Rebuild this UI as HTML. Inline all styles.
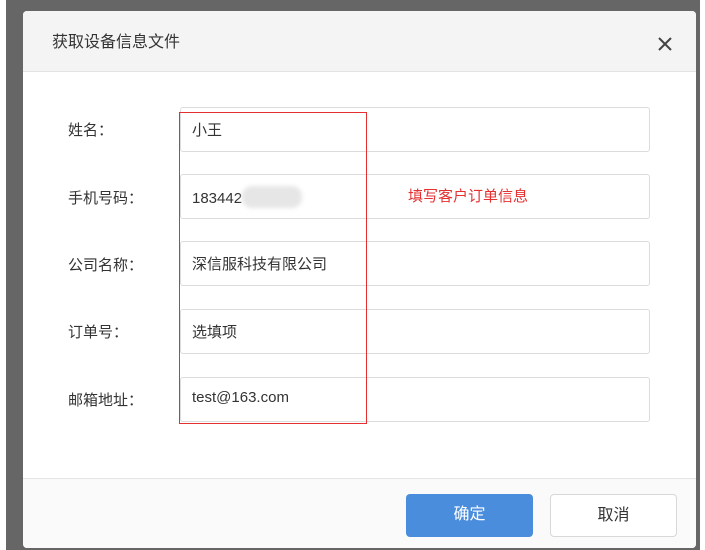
<!DOCTYPE html>
<html><head><meta charset="utf-8"><style>
*{margin:0;padding:0;box-sizing:border-box}
body{width:705px;height:550px;background:#fff;position:relative;overflow:hidden;font-family:"Liberation Sans","Noto Sans CJK SC",sans-serif;color:#333}
.bg{position:absolute;left:6px;top:0;width:694px;height:550px;background:#666}
.dlg{position:absolute;left:23px;top:11px;width:673px;height:537px;background:#fff;border-radius:4px;overflow:hidden}
.hd{height:61px;background:#f4f4f4;border-bottom:1px solid #e3e3e3;position:relative}
.hd .t{position:absolute;left:29px;top:17px;font-size:16px;color:#333}
.hd .x{position:absolute;left:633px;top:24px;width:18px;height:18px}
.lbl{position:absolute;left:45px;font-size:15px;color:#333}
.in{position:absolute;left:157px;width:470px;height:45px;border:1px solid #dcdcdc;border-radius:3px;font-size:15px;padding:11px 0 0 11px;color:#333}
.red{position:absolute;left:156px;top:101px;width:188px;height:312px;border:1.5px solid #e53030}
.ft{position:absolute;left:0;top:467px;width:673px;height:70px;background:#fafafa;border-top:1px solid #e5e5e5}
.b{position:absolute;top:15px;width:127px;height:43px;border-radius:4px;font-size:16px;text-align:center;line-height:42px}
</style></head><body>
<div class="bg"></div>
<div class="dlg">
<div class="hd"><div class="t">获取设备信息文件</div>
<svg class="x" viewBox="0 0 18 18"><path d="M3 3L15 15M15 3L3 15" stroke="#444" stroke-width="2"/></svg></div>
<div class="lbl" style="top:108px">姓名：</div>
<div class="in" style="top:96px">小王</div>
<div class="lbl" style="top:176px">手机号码：</div>
<div class="in" style="top:163px">183442<span style="display:inline-block;width:60px;height:22px;background:#e6e6e6;vertical-align:-5px;border-radius:10px;filter:blur(2px)"></span></div>
<div style="position:absolute;left:385px;top:174px;font-size:15px;color:#e53030">填写客户订单信息</div>
<div class="lbl" style="top:243px">公司名称：</div>
<div class="in" style="top:230px">深信服科技有限公司</div>
<div class="lbl" style="top:310px">订单号：</div>
<div class="in" style="top:298px">选填项</div>
<div class="lbl" style="top:378px">邮箱地址：</div>
<div class="in" style="top:366px">test@163.com</div>
<div class="red"></div>
<div class="ft">
<div class="b" style="left:383px;background:#4a8ddc;color:#fff">确定</div>
<div class="b" style="left:527px;background:#fff;border:1px solid #d8d8d8;color:#333">取消</div>
</div>
</div>
</body></html>
